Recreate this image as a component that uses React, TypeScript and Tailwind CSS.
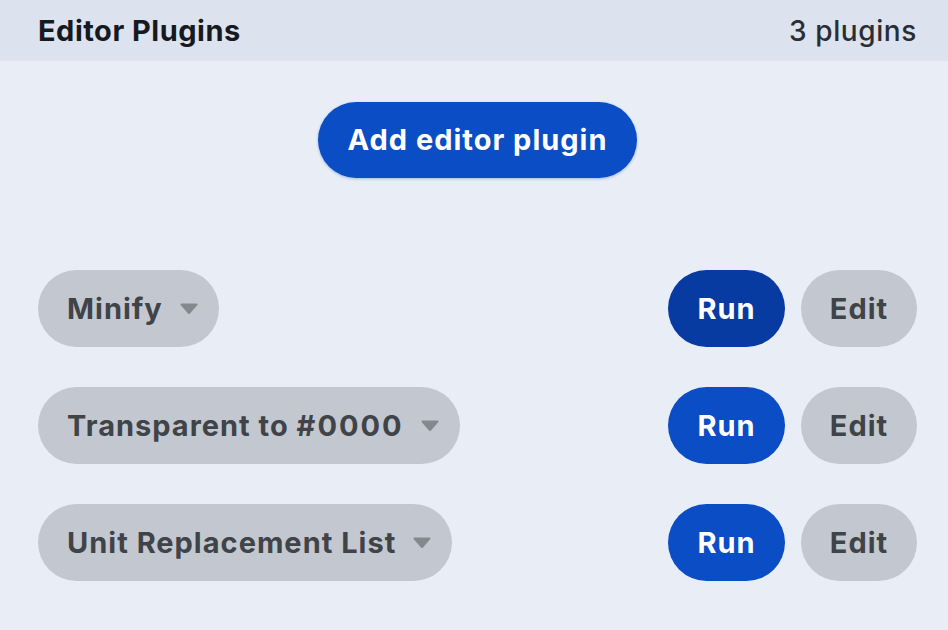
import React from "react";

const plugins: React.ReactNode[] = [
  "Minify",
  <>
    Transparent to <span className="tracking-[2px]">#0000</span>
  </>,
  "Unit Replacement List",
];

function Caret() {
  return (
    <svg width="18" height="11" viewBox="0 0 18 11" className="shrink-0">
      <path d="M1.5 1.5 H16.5 L9 10 Z" fill="#85888f" stroke="#85888f" strokeWidth="2" strokeLinejoin="round" />
    </svg>
  );
}

export default function App() {
  return (
    <div
      className="w-[948px] h-[630px] bg-[#e9eef6] flex flex-col"
      style={{ fontFamily: "Inter, 'Noto Sans', sans-serif" }}
    >
      <div className="h-[61px] bg-[#dce3ee] flex items-center justify-between pl-[38px] pr-[31px]">
        <span className="text-[29px] font-bold text-[#16191f] tracking-[0.5px]">Editor Plugins</span>
        <span className="text-[28px] font-medium text-[#2a2d33] tracking-[0.6px]">3 plugins</span>
      </div>
      <div className="flex justify-center pt-[41px] pl-[38px] pr-[31px]">
        <button className="h-[76px] px-[29px] rounded-full bg-[#0b4dc4] text-white text-[29px] font-bold tracking-[1px] shadow-[0_1px_3px_rgba(11,77,196,0.35)]">
          Add editor plugin
        </button>
      </div>
      <div className="flex flex-col gap-[40px] pt-[92px] pl-[38px] pr-[31px]">
        {plugins.map((p, i) => (
          <div key={i} className="flex items-center justify-between">
            <button className="h-[77px] pl-[29px] pr-[21px] rounded-full bg-[#c3c8d0] flex items-center gap-[17px]">
              <span className="text-[29px] font-bold text-[#404347] tracking-[1px]">{p}</span>
              <Caret />
            </button>
            <div className="flex items-center gap-[16px]">
              <button
                className={`h-[77px] w-[117px] rounded-full text-white text-[29px] font-bold tracking-[1px] ${
                  i === 0 ? "bg-[#073ba1]" : "bg-[#0b4dc4]"
                }`}
              >
                Run
              </button>
              <button className="h-[77px] w-[116px] rounded-full bg-[#c3c8d0] text-[#404347] text-[29px] font-bold tracking-[1px]">
                Edit
              </button>
            </div>
          </div>
        ))}
      </div>
    </div>
  );
}
